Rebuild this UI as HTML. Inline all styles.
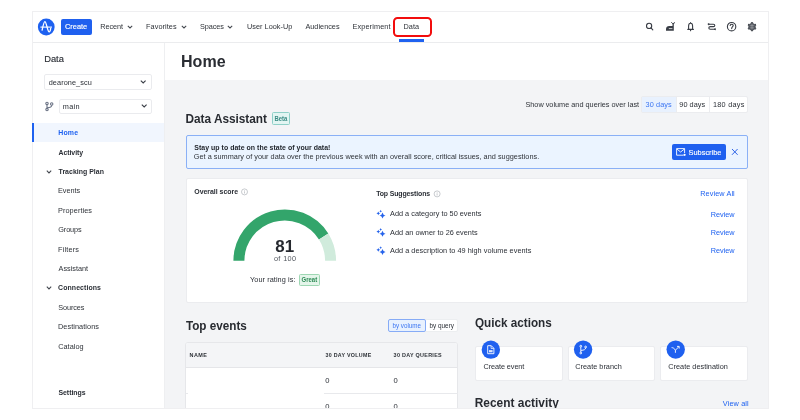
<!DOCTYPE html>
<html><head><meta charset="utf-8">
<style>
html,body{margin:0;padding:0;width:800px;height:420px;overflow:hidden;background:#fff;}
body{position:relative;font-family:"Liberation Sans",sans-serif;color:#2b2f36;}
.a{position:absolute;white-space:nowrap;line-height:1;}
.box{position:absolute;box-sizing:border-box;}
svg.a{overflow:visible;}
#root{position:absolute;left:0;top:0;width:800px;height:420px;filter:blur(0.35px);}
</style></head><body><div id="root">
<!-- frame border -->
<div class="box" style="left:31.6px;top:10.8px;width:737.4px;height:398.2px;border:1.2px solid #efeff1;"></div>

<!-- header -->
<div class="box" style="left:33px;top:42px;width:735px;height:1px;background:#ebecee;"></div>
<svg class="a" style="left:37px;top:18px" width="19" height="19" viewBox="0 0 19 19">
  <circle cx="9.25" cy="9" r="8.4" fill="#1e61f0"/>
  <path d="M5.1 12.2 C5.9 8.4 6.9 3.6 7.9 3.6 C9.3 3.6 10.6 13.9 12.2 13.9 C13.2 13.9 13.5 11.6 13.7 10.4" stroke="#fff" stroke-width="1.3" fill="none" stroke-linecap="round"/>
  <path d="M3.4 9.1 L15 9.1" stroke="#fff" stroke-width="1.1" fill="none"/>
</svg>
<div class="box" style="left:61px;top:19px;width:30.5px;height:16px;background:#1f60ef;border-radius:2px;"></div>
<div class="a" style="left:64.93px;top:22.60px;font-size:7.44px;font-weight:400;color:#ffffff;-webkit-text-stroke:0.15px #ffffff;transform:scaleY(1.06);transform-origin:0 6.00px;">Create</div>
<div class="a" style="left:100.22px;top:23.30px;font-size:7.30px;font-weight:400;color:#2f3339;transform:scaleY(1.06);transform-origin:0 6.00px;letter-spacing:-0.072px;">Recent</div>
<svg class="a" style="left:127px;top:25px" width="6" height="4" viewBox="0 0 6 4"><path d="M0.8 0.9 L3 3 L5.2 0.9" stroke="#44484f" stroke-width="1.05" fill="none"/></svg>
<div class="a" style="left:146.02px;top:23.30px;font-size:7.30px;font-weight:400;color:#2f3339;transform:scaleY(1.06);transform-origin:0 6.00px;letter-spacing:0.073px;">Favorites</div>
<svg class="a" style="left:180.8px;top:25px" width="6" height="4" viewBox="0 0 6 4"><path d="M0.8 0.9 L3 3 L5.2 0.9" stroke="#44484f" stroke-width="1.05" fill="none"/></svg>
<div class="a" style="left:200.11px;top:23.30px;font-size:7.30px;font-weight:400;color:#2f3339;transform:scaleY(1.06);transform-origin:0 6.00px;letter-spacing:-0.128px;">Spaces</div>
<svg class="a" style="left:227.4px;top:25px" width="6" height="4" viewBox="0 0 6 4"><path d="M0.8 0.9 L3 3 L5.2 0.9" stroke="#44484f" stroke-width="1.05" fill="none"/></svg>
<div class="a" style="left:247.09px;top:23.30px;font-size:7.30px;font-weight:400;color:#2f3339;transform:scaleY(1.06);transform-origin:0 6.00px;letter-spacing:0.013px;">User Look-Up</div>
<div class="a" style="left:305.40px;top:23.30px;font-size:7.30px;font-weight:400;color:#2f3339;transform:scaleY(1.06);transform-origin:0 6.00px;letter-spacing:0.016px;">Audiences</div>
<div class="a" style="left:352.42px;top:23.30px;font-size:7.30px;font-weight:400;color:#2f3339;transform:scaleY(1.06);transform-origin:0 6.00px;letter-spacing:0.139px;">Experiment</div>
<div class="a" style="left:403.42px;top:23.20px;font-size:7.30px;font-weight:400;color:#2f3339;transform:scaleY(1.06);transform-origin:0 6.00px;letter-spacing:0.112px;">Data</div>
<div class="box" style="left:393.1px;top:16.6px;width:38.7px;height:20px;border:2.8px solid #f20d0d;border-radius:4.5px;"></div>
<div class="box" style="left:399.3px;top:39px;width:25px;height:3px;background:#1f62f0;"></div>

<!-- right icons -->
<svg class="a" style="left:640px;top:18px" width="130" height="16" viewBox="0 0 130 16">
  <g stroke="#383c44" fill="none" stroke-width="1.1" stroke-linecap="round">
    <circle cx="9.1" cy="7.9" r="2.6"/>
    <path d="M11 9.8 L12.8 11.8"/>
    <circle cx="91.6" cy="8.7" r="4.2"/>
    <path d="M90.2 7.5 C90.2 5.9 93.2 5.9 93.2 7.5 C93.2 8.7 91.7 8.6 91.7 10.6"/>
    <path d="M47.8 11.4 L53.4 11.4 M48.6 11.4 L48.6 8.1 C48.6 6.2 49.6 5.3 50.6 5.3 C51.6 5.3 52.6 6.2 52.6 8.1 L52.6 11.4 M50.6 11.6 L50.6 12.8 M50.6 4.6 L50.6 5.2"/>
    <path d="M68.6 6.2 L73.4 6.2 C74.4 6.2 74.8 6.8 74.8 7.4 C74.8 8 74.4 8.6 73.4 8.6 L70.4 8.6 C69.4 8.6 68.8 9.2 68.8 10 C68.8 10.8 69.4 11.2 70.4 11.2 L75 11.2"/>
  </g>
  <path d="M68.2 5.4 L69.6 6.2 L68.2 7 Z M75.4 10.4 L74 11.2 L75.4 12 Z" fill="#383c44" stroke="#383c44" stroke-width="0.6"/>
  <path d="M26 12.8 L26 11 C26 9.1 27.4 7.9 29.2 7.9 L32.5 7.9 L32.5 5.1 L33.8 5.1 L33.8 12.8 Z" fill="#3a3e46"/>
  <path d="M28.8 10.6 L32.4 10.6" stroke="#fff" stroke-width="0.75"/>
  <path d="M31.3 4.3 L32.4 5.4 L33.9 5.4 L35 4.3" stroke="#3a3e46" stroke-width="1" fill="none"/>
  <path d="M111.20 5.50 L111.34 4.55 L112.66 4.55 L112.80 5.50 L113.57 5.99 L114.37 6.41 L115.26 6.06 L115.92 7.19 L115.17 7.79 L115.14 8.70 L115.17 9.61 L115.92 10.21 L115.26 11.34 L114.37 10.99 L113.57 11.41 L112.80 11.90 L112.66 12.85 L111.34 12.85 L111.20 11.90 L110.43 11.41 L109.63 10.99 L108.74 11.34 L108.08 10.21 L108.83 9.61 L108.86 8.70 L108.83 7.79 L108.08 7.19 L108.74 6.06 L109.63 6.41 L110.43 5.99 Z" fill="#5d6168" stroke="#383c44" stroke-width="0.9" stroke-linejoin="round"/>
  <path d="M110.2 7.6 L113.8 7.6 M110.2 9.8 L113.8 9.8 M112 6.2 L112 11.2" stroke="#aeb1b7" stroke-width="0.5"/>
</svg>

<!-- sidebar -->
<div class="box" style="left:164px;top:43px;width:1px;height:365px;background:#eeeff1;"></div>
<div class="a" style="left:44.15px;top:54.60px;font-size:9.33px;font-weight:400;color:#2b2f36;-webkit-text-stroke:0.15px #2b2f36;transform:scaleY(1.06);transform-origin:0 7.00px;">Data</div>
<div class="box" style="left:44.3px;top:74px;width:108px;height:16px;border:1px solid #eaebee;border-radius:2px;background:#fff;"></div>
<div class="a" style="left:48.71px;top:78.80px;font-size:7.30px;font-weight:400;color:#2b2f36;transform:scaleY(1.06);transform-origin:0 6.00px;letter-spacing:0.086px;">dearone_scu</div>
<svg class="a" style="left:139.5px;top:80px" width="7" height="4" viewBox="0 0 7 4"><path d="M0.8 0.6 L3.2 3 L5.6 0.6" stroke="#3a3e46" stroke-width="1.1" fill="none"/></svg>
<svg class="a" style="left:43px;top:100px" width="12" height="13" viewBox="0 0 12 13">
  <g stroke="#6b7385" stroke-width="1.1" fill="none">
    <circle cx="4" cy="3.4" r="1.2"/><circle cx="4" cy="9.6" r="1.2"/><circle cx="8.7" cy="4" r="1.2"/>
    <path d="M4 4.6 L4 8.4 M8.7 5.2 C8.7 7 7 7.6 4.2 7.8"/>
  </g>
</svg>
<div class="box" style="left:58.6px;top:98.6px;width:93.5px;height:15.8px;border:1px solid #eaebee;border-radius:2px;background:#fff;"></div>
<div class="a" style="left:62.86px;top:103.30px;font-size:7.30px;font-weight:400;color:#2b2f36;transform:scaleY(1.06);transform-origin:0 6.00px;letter-spacing:0.275px;">main</div>
<svg class="a" style="left:140.5px;top:104.4px" width="7" height="4" viewBox="0 0 7 4"><path d="M0.8 0.6 L3.2 3 L5.6 0.6" stroke="#3a3e46" stroke-width="1.1" fill="none"/></svg>

<div class="box" style="left:33px;top:122.5px;width:131px;height:19.7px;background:#f1f6fe;"></div>
<div class="box" style="left:32px;top:122.5px;width:2px;height:19.7px;background:#1f62f0;"></div>
<div class="a" style="left:58.18px;top:129.90px;font-size:6.95px;font-weight:700;color:#1f62f0;transform:scaleY(1.1);transform-origin:0 5.00px;letter-spacing:0.196px;">Home</div>
<div class="a" style="left:58.46px;top:149.60px;font-size:6.95px;font-weight:700;color:#2b2f36;transform:scaleY(1.1);transform-origin:0 5.00px;letter-spacing:-0.056px;">Activity</div>
<svg class="a" style="left:45.5px;top:169.6px" width="6" height="4" viewBox="0 0 6 4"><path d="M0.8 0.7 L3 2.9 L5.2 0.7" stroke="#44484f" stroke-width="1.05" fill="none"/></svg>
<div class="a" style="left:58.53px;top:169.00px;font-size:6.95px;font-weight:700;color:#2b2f36;transform:scaleY(1.1);transform-origin:0 5.00px;letter-spacing:0.025px;">Tracking Plan</div>
<div class="a" style="left:58.02px;top:187.40px;font-size:7.30px;font-weight:400;color:#2f3339;transform:scaleY(1.06);transform-origin:0 6.00px;letter-spacing:-0.023px;">Events</div>
<div class="a" style="left:58.02px;top:206.90px;font-size:7.30px;font-weight:400;color:#2f3339;transform:scaleY(1.06);transform-origin:0 6.00px;letter-spacing:0.081px;">Properties</div>
<div class="a" style="left:58.23px;top:226.30px;font-size:7.30px;font-weight:400;color:#2f3339;transform:scaleY(1.06);transform-origin:0 6.00px;letter-spacing:-0.091px;">Groups</div>
<div class="a" style="left:58.02px;top:245.80px;font-size:7.30px;font-weight:400;color:#2f3339;transform:scaleY(1.06);transform-origin:0 6.00px;letter-spacing:0.172px;">Filters</div>
<div class="a" style="left:58.60px;top:265.20px;font-size:7.30px;font-weight:400;color:#2f3339;transform:scaleY(1.06);transform-origin:0 6.00px;letter-spacing:-0.029px;">Assistant</div>
<svg class="a" style="left:45.5px;top:286.3px" width="6" height="4" viewBox="0 0 6 4"><path d="M0.8 0.7 L3 2.9 L5.2 0.7" stroke="#44484f" stroke-width="1.05" fill="none"/></svg>
<div class="a" style="left:58.12px;top:285.00px;font-size:6.95px;font-weight:700;color:#2b2f36;transform:scaleY(1.1);transform-origin:0 5.00px;letter-spacing:0.084px;">Connections</div>
<div class="a" style="left:58.31px;top:303.80px;font-size:7.30px;font-weight:400;color:#2f3339;transform:scaleY(1.06);transform-origin:0 6.00px;letter-spacing:-0.128px;">Sources</div>
<div class="a" style="left:58.02px;top:322.80px;font-size:7.30px;font-weight:400;color:#2f3339;transform:scaleY(1.06);transform-origin:0 6.00px;letter-spacing:0.067px;">Destinations</div>
<div class="a" style="left:58.23px;top:342.70px;font-size:7.30px;font-weight:400;color:#2f3339;transform:scaleY(1.06);transform-origin:0 6.00px;letter-spacing:0.036px;">Catalog</div>
<div class="a" style="left:58.46px;top:390.20px;font-size:6.95px;font-weight:700;color:#2b2f36;transform:scaleY(1.1);transform-origin:0 5.00px;letter-spacing:-0.032px;">Settings</div>

<!-- content -->
<div class="box" style="left:165px;top:43px;width:603px;height:36.5px;background:#fff;"></div>
<div class="box" style="left:165px;top:79.5px;width:603px;height:329px;background:#f3f4f6;"></div>
<div class="a" style="left:181.04px;top:53.00px;font-size:16.05px;font-weight:700;color:#2a2d33;transform:scaleY(1.04);transform-origin:0 14.00px;">Home</div>

<div class="a" style="left:525.41px;top:101.00px;font-size:7.30px;font-weight:400;color:#2f3339;transform:scaleY(1.06);transform-origin:0 6.00px;letter-spacing:0.005px;">Show volume and queries over last</div>
<div class="box" style="left:641px;top:95.6px;width:107px;height:17.2px;background:#fff;border:1px solid #ebecef;border-radius:2px;"></div>
<div class="box" style="left:642px;top:96.6px;width:33.7px;height:15.2px;background:#e8f1fe;"></div>
<div class="box" style="left:675.7px;top:96px;width:1px;height:16.4px;background:#ebecef;"></div>
<div class="box" style="left:709.2px;top:96px;width:1px;height:16.4px;background:#ebecef;"></div>
<div class="a" style="left:645.58px;top:101.00px;font-size:7.30px;font-weight:400;color:#3c76f2;transform:scaleY(1.06);transform-origin:0 6.00px;letter-spacing:0.095px;">30 days</div>
<div class="a" style="left:679.31px;top:101.00px;font-size:7.30px;font-weight:400;color:#2b2f36;transform:scaleY(1.06);transform-origin:0 6.00px;letter-spacing:0.057px;">90 days</div>
<div class="a" style="left:712.99px;top:101.00px;font-size:7.30px;font-weight:400;color:#2b2f36;transform:scaleY(1.06);transform-origin:0 6.00px;letter-spacing:0.243px;">180 days</div>

<div class="a" style="left:185.49px;top:114.20px;font-size:11.81px;font-weight:700;color:#282b31;transform:scaleY(1.1);transform-origin:0 9.00px;">Data Assistant</div>
<div class="box" style="left:272px;top:112.3px;width:18.4px;height:12.4px;background:#e2f5f2;border:1px solid #8fd0c8;border-radius:1.5px;"></div>
<div class="a" style="left:274.54px;top:116.90px;font-size:5.94px;font-weight:700;color:#3a8b84;transform:scaleY(1.18);transform-origin:0 4.00px;">Beta</div>

<div class="box" style="left:186px;top:135px;width:562px;height:33.8px;background:#ebf4ff;border:1px solid #8ab0f6;border-radius:2px;"></div>
<div class="a" style="left:194.26px;top:144.80px;font-size:6.95px;font-weight:700;color:#23272e;transform:scaleY(1.1);transform-origin:0 5.00px;letter-spacing:0.04px;">Stay up to date on the state of your data!</div>
<div class="a" style="left:193.83px;top:152.70px;font-size:7.30px;font-weight:400;color:#2f3339;transform:scaleY(1.06);transform-origin:0 6.00px;letter-spacing:0.025px;">Get a summary of your data over the previous week with an overall score, critical issues, and suggestions.</div>
<div class="box" style="left:672px;top:144px;width:54px;height:16px;background:#1f60ef;border-radius:2px;"></div>
<svg class="a" style="left:675px;top:147px" width="12" height="10" viewBox="0 0 12 10">
  <g stroke="#fff" stroke-width="0.9" fill="none"><path d="M8.6 8.2 L1.6 8.2 L1.6 1.6 L9.6 1.6 L9.6 6"/><path d="M1.8 2 L5.6 5 L9.4 2"/></g>
  <circle cx="9.6" cy="7.8" r="1.1" fill="#fff"/>
</svg>
<div class="a" style="left:688.50px;top:148.70px;font-size:7.41px;font-weight:400;color:#ffffff;-webkit-text-stroke:0.12px #ffffff;transform:scaleY(1.06);transform-origin:0 6.00px;">Subscribe</div>
<svg class="a" style="left:731px;top:148px" width="8" height="8" viewBox="0 0 8 8"><path d="M1 1 L6.6 6.8 M6.6 1 L1 6.8" stroke="#2c63e8" stroke-width="1"/></svg>

<!-- score card -->
<div class="box" style="left:186px;top:177.7px;width:561.5px;height:124.9px;background:#fff;border:1px solid #ebecef;border-radius:2px;"></div>
<div class="a" style="left:194.32px;top:188.80px;font-size:6.95px;font-weight:700;color:#2b2f36;transform:scaleY(1.1);transform-origin:0 5.00px;letter-spacing:-0.024px;">Overall score</div>
<svg class="a" style="left:240px;top:188px" width="9" height="8" viewBox="0 0 9 8"><circle cx="4.5" cy="3.9" r="3" stroke="#a3a7ae" stroke-width="0.6" fill="none"/><path d="M4.5 3.3 L4.5 5.5" stroke="#a3a7ae" stroke-width="0.6"/><circle cx="4.5" cy="2.4" r="0.35" fill="#a3a7ae"/></svg>

<svg class="a" style="left:225px;top:200px" width="120" height="70" viewBox="225 200 120 70">
  <path d="M238.90 260.8 A45.85 45.85 0 0 1 323.63 236.50" stroke="#33a56b" stroke-width="11" fill="none"/>
  <path d="M323.63 236.50 A45.85 45.85 0 0 1 330.60 260.8" stroke="#d0ebdc" stroke-width="11" fill="none"/>
</svg>
<div class="a" style="left:275.29px;top:238.70px;font-size:16.95px;font-weight:700;color:#26292f;transform:scaleY(0.98);transform-origin:0 13.00px;">81</div>
<div class="a" style="left:273.91px;top:254.90px;font-size:7.30px;font-weight:400;color:#50555d;transform:scaleY(1.06);transform-origin:0 6.00px;letter-spacing:0.372px;">of 100</div>
<div class="a" style="left:250.05px;top:275.90px;font-size:7.30px;font-weight:400;color:#2b2f36;transform:scaleY(1.06);transform-origin:0 6.00px;letter-spacing:0.073px;">Your rating is:</div>
<div class="box" style="left:299px;top:273.5px;width:21px;height:12.3px;background:#e4f5ea;border:1px solid #9ed7b3;border-radius:1.5px;"></div>
<div class="a" style="left:301.56px;top:276.80px;font-size:5.99px;font-weight:700;color:#2f8c57;transform:scaleY(1.1);transform-origin:0 5.00px;">Great</div>

<div class="a" style="left:376.13px;top:190.70px;font-size:6.95px;font-weight:700;color:#2b2f36;transform:scaleY(1.1);transform-origin:0 5.00px;letter-spacing:-0.124px;">Top Suggestions</div>
<svg class="a" style="left:432.5px;top:190px" width="9" height="8" viewBox="0 0 9 8"><circle cx="4.1" cy="3.9" r="3" stroke="#a3a7ae" stroke-width="0.6" fill="none"/><path d="M4.1 3.3 L4.1 5.5" stroke="#a3a7ae" stroke-width="0.6"/><circle cx="4.1" cy="2.4" r="0.35" fill="#a3a7ae"/></svg>

<svg class="a" style="left:374px;top:207px" width="14" height="50" viewBox="0 0 14 50">
  <g fill="#2563eb" transform="translate(0 0)">
    <path d="M8.5 5.5 Q9 8 11.5 8.5 Q9 9 8.5 11.5 Q8 9 5.5 8.5 Q8 8 8.5 5.5 Z"/>
    <path d="M4.3 4.4 Q4.6 6 6.2 6.3 Q4.6 6.6 4.3 8.2 Q4 6.6 2.4 6.3 Q4 6 4.3 4.4 Z"/>
    <path d="M6.7 2.8 Q6.9 4 8 4.2 Q6.9 4.4 6.7 5.6 Q6.5 4.4 5.4 4.2 Q6.5 4 6.7 2.8 Z"/>
  </g>
  <g fill="#2563eb" transform="translate(0 18.3)">
    <path d="M8.5 5.5 Q9 8 11.5 8.5 Q9 9 8.5 11.5 Q8 9 5.5 8.5 Q8 8 8.5 5.5 Z"/>
    <path d="M4.3 4.4 Q4.6 6 6.2 6.3 Q4.6 6.6 4.3 8.2 Q4 6.6 2.4 6.3 Q4 6 4.3 4.4 Z"/>
    <path d="M6.7 2.8 Q6.9 4 8 4.2 Q6.9 4.4 6.7 5.6 Q6.5 4.4 5.4 4.2 Q6.5 4 6.7 2.8 Z"/>
  </g>
  <g fill="#2563eb" transform="translate(0 36.5)">
    <path d="M8.5 5.5 Q9 8 11.5 8.5 Q9 9 8.5 11.5 Q8 9 5.5 8.5 Q8 8 8.5 5.5 Z"/>
    <path d="M4.3 4.4 Q4.6 6 6.2 6.3 Q4.6 6.6 4.3 8.2 Q4 6.6 2.4 6.3 Q4 6 4.3 4.4 Z"/>
    <path d="M6.7 2.8 Q6.9 4 8 4.2 Q6.9 4.4 6.7 5.6 Q6.5 4.4 5.4 4.2 Q6.5 4 6.7 2.8 Z"/>
  </g>
</svg>
<div class="a" style="left:390.00px;top:210.30px;font-size:7.30px;font-weight:400;color:#2b2f36;transform:scaleY(1.06);transform-origin:0 6.00px;letter-spacing:0.02px;">Add a category to 50 events</div>
<div class="a" style="left:390.00px;top:229.00px;font-size:7.30px;font-weight:400;color:#2b2f36;transform:scaleY(1.06);transform-origin:0 6.00px;letter-spacing:0.036px;">Add an owner to 26 events</div>
<div class="a" style="left:390.00px;top:247.30px;font-size:7.30px;font-weight:400;color:#2b2f36;transform:scaleY(1.06);transform-origin:0 6.00px;letter-spacing:0.044px;">Add a description to 49 high volume events</div>
<div class="a" style="left:700.22px;top:190.30px;font-size:7.30px;font-weight:400;color:#1f62f0;transform:scaleY(1.06);transform-origin:0 6.00px;letter-spacing:0.096px;">Review All</div>
<div class="a" style="left:710.72px;top:210.80px;font-size:7.30px;font-weight:400;color:#1f62f0;transform:scaleY(1.06);transform-origin:0 6.00px;letter-spacing:-0.002px;">Review</div>
<div class="a" style="left:710.72px;top:228.90px;font-size:7.30px;font-weight:400;color:#1f62f0;transform:scaleY(1.06);transform-origin:0 6.00px;letter-spacing:-0.002px;">Review</div>
<div class="a" style="left:710.72px;top:247.30px;font-size:7.30px;font-weight:400;color:#1f62f0;transform:scaleY(1.06);transform-origin:0 6.00px;letter-spacing:-0.002px;">Review</div>

<!-- top events -->
<div class="a" style="left:185.88px;top:319.80px;font-size:11.71px;font-weight:700;color:#282b31;transform:scaleY(1.1);transform-origin:0 10.00px;">Top events</div>
<div class="box" style="left:388px;top:319px;width:70px;height:12.5px;background:#fff;border:1px solid #eceef0;border-radius:2px;"></div>
<div class="box" style="left:388px;top:319px;width:38px;height:12.5px;background:#e8f1fe;border:1px solid #86abf6;border-radius:2px;"></div>
<div class="a" style="left:392.42px;top:322.80px;font-size:6.28px;font-weight:400;color:#3c76f2;transform:scaleY(1.06);transform-origin:0 5.00px;">by volume</div>
<div class="a" style="left:429.42px;top:322.80px;font-size:6.41px;font-weight:400;color:#2b2f36;transform:scaleY(1.06);transform-origin:0 5.00px;">by query</div>

<div class="box" style="left:185.2px;top:341.5px;width:273.3px;height:80px;background:#fff;border:1px solid #e6e7ea;border-radius:3px;"></div>
<div class="box" style="left:186.2px;top:342.5px;width:271.3px;height:25.5px;background:#f4f5f7;border-bottom:1px solid #e5e6e9;border-radius:2px 2px 0 0;"></div>
<div class="a" style="left:189.57px;top:353.40px;font-size:5.46px;font-weight:700;color:#2c3036;transform:scaleY(1.12);transform-origin:0 4.00px;letter-spacing:0.45px;">NAME</div>
<div class="a" style="left:325.39px;top:353.40px;font-size:5.32px;font-weight:700;color:#2c3036;transform:scaleY(1.12);transform-origin:0 4.00px;letter-spacing:0.3px;">30 DAY VOLUME</div>
<div class="a" style="left:393.59px;top:353.40px;font-size:5.42px;font-weight:700;color:#2c3036;transform:scaleY(1.12);transform-origin:0 4.00px;letter-spacing:0.3px;">30 DAY QUERIES</div>
<div class="a" style="left:325.37px;top:376.70px;font-size:7.60px;font-weight:400;color:#2b2f36;transform:scaleY(1.06);transform-origin:0 6.00px;">0</div>
<div class="a" style="left:393.47px;top:376.70px;font-size:7.60px;font-weight:400;color:#2b2f36;transform:scaleY(1.06);transform-origin:0 6.00px;">0</div>
<div class="box" style="left:324px;top:393px;width:134px;height:1px;background:#e8e9ec;"></div>
<div class="box" style="left:186px;top:393px;width:2px;height:1px;background:#e8e9ec;"></div>
<div class="a" style="left:325.37px;top:402.60px;font-size:7.60px;font-weight:400;color:#2b2f36;transform:scaleY(1.06);transform-origin:0 6.00px;">0</div>
<div class="a" style="left:393.47px;top:402.60px;font-size:7.60px;font-weight:400;color:#2b2f36;transform:scaleY(1.06);transform-origin:0 6.00px;">0</div>

<!-- quick actions -->
<div class="a" style="left:475.03px;top:317.30px;font-size:11.71px;font-weight:700;color:#282b31;transform:scaleY(1.1);transform-origin:0 10.00px;">Quick actions</div>
<div class="box" style="left:475px;top:346.4px;width:87.6px;height:34.3px;background:#fff;border:1px solid #ebecef;border-radius:2px;"></div>
<div class="box" style="left:567.6px;top:346.4px;width:87.5px;height:34.3px;background:#fff;border:1px solid #ebecef;border-radius:2px;"></div>
<div class="box" style="left:660.2px;top:346.4px;width:87.5px;height:34.3px;background:#fff;border:1px solid #ebecef;border-radius:2px;"></div>
<svg class="a" style="left:470px;top:335px" width="230" height="30" viewBox="470 335 230 30">
  <circle cx="490.85" cy="349.65" r="9.2" fill="#1f60ef"/>
  <rect x="489" y="350.1" width="3.6" height="2.2" fill="#fff" opacity="0.85"/>
  <circle cx="583.1" cy="349.6" r="9.2" fill="#1f60ef"/>
  <circle cx="675.7" cy="349.6" r="9.2" fill="#1f60ef"/>
  <g stroke="#fff" stroke-width="0.9" fill="none">
    <path d="M487.7 345.7 L491.3 345.7 L493.9 348.3 L493.9 353.7 L487.7 353.7 Z"/>
    <path d="M491.1 345.8 L491.1 348.5 L493.8 348.5" stroke-width="0.7"/>
    <circle cx="580.8" cy="346.2" r="0.9"/><circle cx="580.8" cy="353" r="0.9"/><circle cx="585.6" cy="347" r="0.9"/>
    <path d="M580.8 347.1 L580.8 352.1 M585.6 347.9 C585.6 349.6 584 350.2 581 350.4"/>
    <path d="M671.6 347.6 C673.2 347.6 674.6 348.6 675.4 350.2 L675.4 352.8 M675.4 350.2 L678.8 346.8"/>
    <path d="M677 346.4 L679.2 346.4 L679.2 348.6"/>
  </g>
</svg>
<div class="a" style="left:483.44px;top:363.10px;font-size:7.30px;font-weight:400;color:#2b2f36;transform:scaleY(1.06);transform-origin:0 6.00px;letter-spacing:-0.077px;">Create event</div>
<div class="a" style="left:575.34px;top:363.10px;font-size:7.30px;font-weight:400;color:#2b2f36;transform:scaleY(1.06);transform-origin:0 6.00px;letter-spacing:0.01px;">Create branch</div>
<div class="a" style="left:668.34px;top:363.10px;font-size:7.30px;font-weight:400;color:#2b2f36;transform:scaleY(1.06);transform-origin:0 6.00px;letter-spacing:0.013px;">Create destination</div>
<div class="a" style="left:474.78px;top:397.90px;font-size:11.92px;font-weight:700;color:#282b31;transform:scaleY(1.1);transform-origin:0 9.00px;">Recent activity</div>
<div class="a" style="left:722.80px;top:399.60px;font-size:7.30px;font-weight:400;color:#1f62f0;transform:scaleY(1.06);transform-origin:0 6.00px;letter-spacing:0.133px;">View all</div>

<!-- mask outside frame bottom -->
<div class="box" style="left:0;top:409px;width:800px;height:11px;background:#fff;"></div>
<div class="box" style="left:31.6px;top:407.8px;width:737.4px;height:1.2px;background:#efeff1;"></div>
<div class="box" style="left:767.8px;top:10.8px;width:1.2px;height:398.2px;background:#efeff1;"></div>

</div></body></html>
